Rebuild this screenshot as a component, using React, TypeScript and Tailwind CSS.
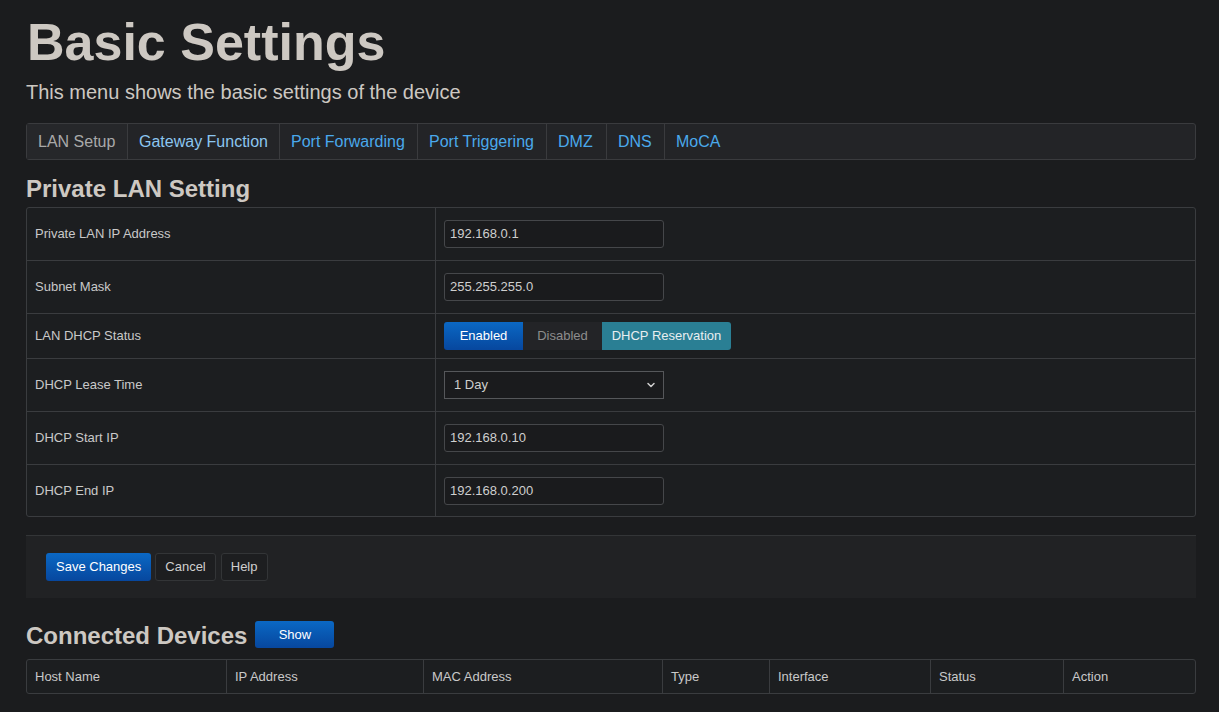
import React from 'react'

const tabs = [
  { label: 'LAN Setup', cls: 'text-[#a9a9a9] bg-[#26272a]', w: 'w-[101px]' },
  { label: 'Gateway Function', cls: 'text-[#8cc6f0]', w: 'w-[152px]' },
  { label: 'Port Forwarding', cls: 'text-[#4aa9ec]', w: 'w-[138px]' },
  { label: 'Port Triggering', cls: 'text-[#4aa9ec]', w: 'w-[129px]' },
  { label: 'DMZ', cls: 'text-[#4aa9ec]', w: 'w-[60px]' },
  { label: 'DNS', cls: 'text-[#4aa9ec]', w: 'w-[58px]' },
  { label: 'MoCA', cls: 'text-[#4aa9ec] border-r-0', w: 'w-[66px]' },
]

const deviceCols = [
  { label: 'Host Name', w: 'w-[200px]' },
  { label: 'IP Address', w: 'w-[197px]' },
  { label: 'MAC Address', w: 'w-[239px]' },
  { label: 'Type', w: 'w-[107px]' },
  { label: 'Interface', w: 'w-[161px]' },
  { label: 'Status', w: 'w-[133px]' },
  { label: 'Action', w: 'flex-1' },
]

const TextInput = ({ value }: { value: string }) => (
  <div className="w-[220px] h-[28px] flex items-center pl-[5px] border border-[#45474a] rounded-[3px] bg-[#1a1b1d] text-[13px] text-[#cfcfcf]">
    {value}
  </div>
)

const Row = ({ label, children, h = 'h-[53px]', last = false }: { label: string; children: React.ReactNode; h?: string; last?: boolean }) => (
  <div className={`flex ${h} ${last ? '' : 'border-b border-[#3a3c3f]'}`}>
    <div className="w-[409px] shrink-0 flex items-center pl-[8px] border-r border-[#3a3c3f] text-[13px] text-[#c9c9c9]">
      {label}
    </div>
    <div className="flex-1 flex items-center pl-[8px]">{children}</div>
  </div>
)

const App = () => {
  return (
    <div className="min-h-screen bg-[#1b1c1e] pl-[26px] pr-[23px] pt-[16px] pb-[20px]" style={{ fontFamily: '"Liberation Sans", Arial, sans-serif' }}>
      {/* Page header */}
      <h1 className="text-[52px] leading-[52px] font-bold text-[#cdc8c2] pl-[1px]">Basic Settings</h1>
      <p className="mt-[10px] text-[20px] leading-[28px] text-[#cdc8c2]">This menu shows the basic settings of the device</p>

      {/* Tabs */}
      <div className="mt-[17px] flex h-[37px] border border-[#3a3b3e] rounded-[3px] bg-[#232427]">
        {tabs.map((t) => (
          <div key={t.label} className={`${t.w} shrink-0 flex items-center pl-[11px] text-[16px] border-r border-[#3a3b3e] ${t.cls}`}>
            {t.label}
          </div>
        ))}
      </div>

      {/* Private LAN */}
      <h2 className="mt-[13px] text-[24px] leading-[32px] font-bold text-[#cdc8c2]">Private LAN Setting</h2>
      <div className="mt-[2px] border border-[#3a3c3f] rounded-[3px] bg-[#1c1e20]">
        <Row label="Private LAN IP Address"><TextInput value="192.168.0.1" /></Row>
        <Row label="Subnet Mask"><TextInput value="255.255.255.0" /></Row>
        <Row label="LAN DHCP Status" h="h-[45px]">
          <div className="flex h-[28px] text-[13px] rounded-[3px] overflow-hidden">
            <div className="w-[79px] flex items-center justify-center text-white bg-gradient-to-b from-[#0b68c4] to-[#07479e]">Enabled</div>
            <div className="w-[79px] flex items-center justify-center text-[#8d8d8d] bg-[#232427]">Disabled</div>
            <div className="w-[129px] flex items-center justify-center text-[#e8eef0] bg-[#2a7f94]">DHCP Reservation</div>
          </div>
        </Row>
        <Row label="DHCP Lease Time">
          <div className="w-[220px] h-[28px] flex items-center justify-between pl-[9px] pr-[6px] border border-[#55575a] bg-[#1a1b1d] text-[13px] text-[#cfcfcf]">
            <span>1 Day</span>
            <svg width="12" height="12" viewBox="0 0 24 24" fill="none" stroke="#cfcfcf" strokeWidth="3" strokeLinecap="round" strokeLinejoin="round">
              <path d="M6 9l6 6 6-6" />
            </svg>
          </div>
        </Row>
        <Row label="DHCP Start IP"><TextInput value="192.168.0.10" /></Row>
        <Row label="DHCP End IP" h="h-[51px]" last><TextInput value="192.168.0.200" /></Row>
      </div>

      {/* Actions */}
      <div className="mt-[18px] h-[63px] flex items-center pl-[20px] border-t border-[#333537] bg-[#212224]">
        <button className="h-[28px] px-[10px] rounded-[3px] text-[13px] text-white bg-gradient-to-b from-[#0b68c4] to-[#07479e]">Save Changes</button>
        <button className="ml-[4px] h-[28px] px-[9px] rounded-[3px] text-[13px] text-[#cfcfcf] bg-[#1d1e20] border border-[#333537]">Cancel</button>
        <button className="ml-[5px] h-[28px] px-[9px] rounded-[3px] text-[13px] text-[#cfcfcf] bg-[#1d1e20] border border-[#333537]">Help</button>
      </div>

      {/* Connected devices */}
      <div className="mt-[22px] flex items-start gap-[8px] h-[32px]">
        <h2 className="text-[24px] leading-[32px] font-bold text-[#cdc8c2]">Connected Devices</h2>
        <button className="mt-[1px] w-[79px] h-[27px] rounded-[3px] text-[13px] text-white bg-gradient-to-b from-[#0b68c4] to-[#07479e]">Show</button>
      </div>
      <div className="mt-[7px] flex h-[35px] border border-[#3a3c3f] rounded-[3px] bg-[#1c1e20]">
        {deviceCols.map((c, i) => (
          <div
            key={c.label}
            className={`${c.w} flex items-center pl-[8px] text-[13px] text-[#c9c9c9] ${i < deviceCols.length - 1 ? 'border-r border-[#3a3c3f]' : ''}`}
          >
            {c.label}
          </div>
        ))}
      </div>
    </div>
  )
}

export default App
